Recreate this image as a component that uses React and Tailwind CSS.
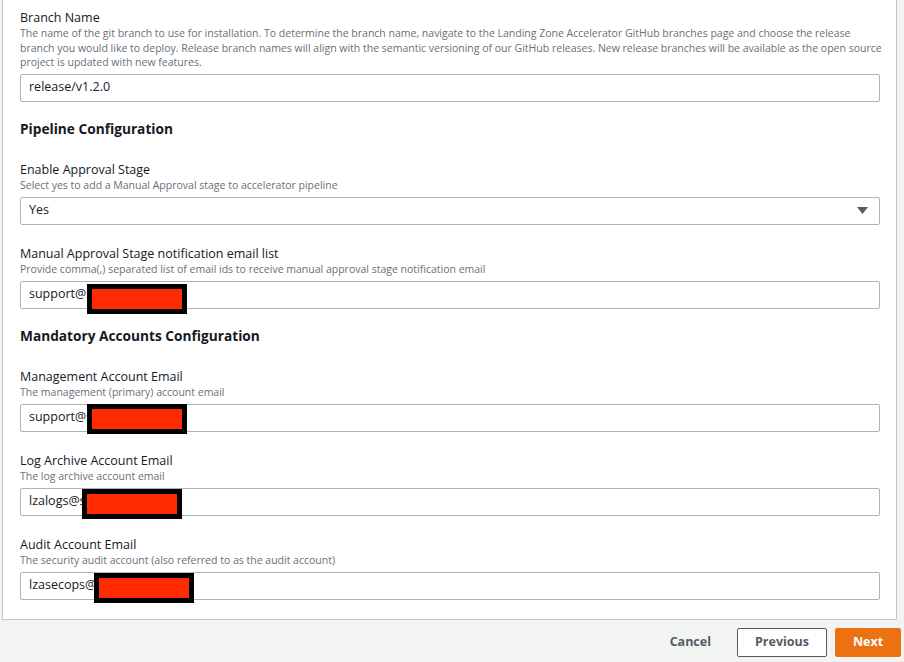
import React from 'react';

const FONT = { fontFamily: '"Open Sans", "Liberation Sans", sans-serif' };

const Redaction = ({ left, top, width = 100, height = 30 }) => (
    <span
        className="absolute border-[5px] border-black bg-[#ff2a00]"
        style={{ left, top, width, height }}
    />
);

const Field = ({ label, description, value, redact, select, tight }) => (
    <div>
        <p className="pt-[1px] text-[12.5px] leading-[17px] text-[#16191f]">{label}</p>
        <p className={`whitespace-nowrap text-[10.5px] text-[#687078] ${tight ? 'leading-[14.5px]' : 'leading-[15px]'}`}>{description}</p>
        <div className="relative mt-[4px] flex h-[28px] items-center justify-between rounded-[2px] border border-[#aab7b8] bg-white pl-[8px] pr-[10px] text-[12.5px] text-[#16191f]">
            <span>{value}</span>
            {select && (
                <svg width="11" height="7" viewBox="0 0 11 7" className="mr-[1px]">
                    <path d="M0 0h11L5.5 7z" fill="#545b64" />
                </svg>
            )}
            {redact && <Redaction {...redact} />}
        </div>
    </div>
);

const SectionHeading = ({ children }) => (
    <h2 className="pt-[17px] pb-[1px] text-[13.7px] font-bold leading-[20px] text-[#16191f]">{children}</h2>
);

const App = () => {
    return (
        <div className="min-h-[662px] w-[904px] bg-[#f2f3f3]" style={FONT}>
            <div className="ml-[2px] w-[895px] border-x border-b border-[#c4c8cc] bg-white pl-[17px] pr-[16px] pt-[8px] pb-[19px]">
                <Field
                    tight
                    label="Branch Name"
                    description={
                        <>
                            The name of the git branch to use for installation. To determine the branch name, navigate to the Landing Zone Accelerator GitHub branches page and choose the release
                            <br />
                            branch you would like to deploy. Release branch names will align with the semantic versioning of our GitHub releases. New release branches will be available as the open source
                            <br />
                            project is updated with new features.
                        </>
                    }
                    value="release/v1.2.0"
                />

                <SectionHeading>Pipeline Configuration</SectionHeading>

                <div className="mt-[20px] space-y-[19px]">
                    <Field
                        label="Enable Approval Stage"
                        description="Select yes to add a Manual Approval stage to accelerator pipeline"
                        value="Yes"
                        select
                    />
                    <Field
                        label="Manual Approval Stage notification email list"
                        description="Provide comma(,) separated list of email ids to receive manual approval stage notification email"
                        value="support@s"
                        redact={{ left: 66, top: 2 }}
                    />
                </div>

                <SectionHeading>Mandatory Accounts Configuration</SectionHeading>

                <div className="mt-[20px] space-y-[19px]">
                    <Field
                        label="Management Account Email"
                        description="The management (primary) account email"
                        value="support@s"
                        redact={{ left: 66, top: -1 }}
                    />
                    <Field
                        label="Log Archive Account Email"
                        description="The log archive account email"
                        value="lzalogs@s"
                        redact={{ left: 61, top: 0 }}
                    />
                    <Field
                        label="Audit Account Email"
                        description="The security audit account (also referred to as the audit account)"
                        value="lzasecops@s"
                        redact={{ left: 73, top: 0 }}
                    />
                </div>
            </div>

            <div className="flex items-center justify-end pt-[8px] pr-[3px]">
                <button type="button" className="mr-[26px] text-[12.5px] font-bold text-[#545b64]">
                    Cancel
                </button>
                <button
                    type="button"
                    className="mr-[8px] h-[29px] w-[90px] rounded-[2px] border border-[#545b64] bg-white text-[12.5px] font-bold text-[#545b64]"
                >
                    Previous
                </button>
                <button
                    type="button"
                    className="h-[29px] w-[66px] rounded-[2px] bg-[#ec7211] text-[12.5px] font-bold text-white"
                >
                    Next
                </button>
            </div>
        </div>
    );
};

export default App;
